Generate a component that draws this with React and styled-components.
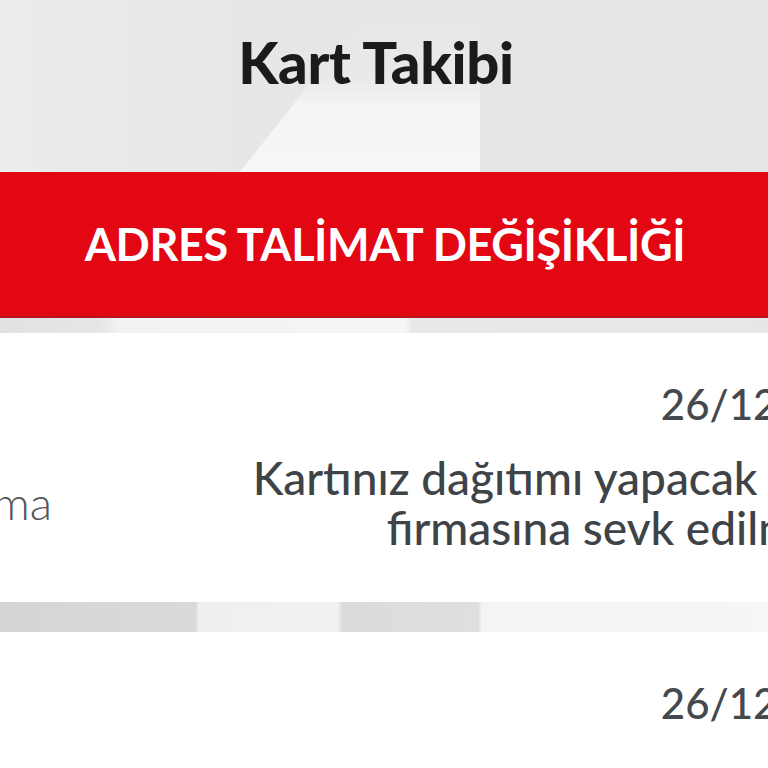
import React from "react";
import styled, { createGlobalStyle } from "styled-components";

const steps = [
  {
    label: "Kargolama",
    date: "26/12/2019",
    lines: ["Kartınız dağıtımı yapacak kargo", "firmasına sevk edilmiştir."],
  },
  {
    label: "Hazırlanma",
    date: "26/12/2019",
    lines: [],
  },
];

const App = () => {
  return (
    <>
      <GlobalStyle />
      <StPage>
        <StHeader>
          <StTitle>Kart Takibi</StTitle>
        </StHeader>
        <StBanner>
          <StBannerText>ADRES TALİMAT DEĞİŞİKLİĞİ</StBannerText>
        </StBanner>
        <StGap height="15px" variant="top" />
        {steps.map((step, i) => (
          <React.Fragment key={i}>
            <StCard>
              <StRow>
                <StLabel>
                  <span>{step.label}</span>
                </StLabel>
                <StDetail>
                  <StDate>{step.date}</StDate>
                  {step.lines.length > 0 && (
                    <StDescription>
                      {step.lines.map((line) => (
                        <span key={line}>{line}</span>
                      ))}
                    </StDescription>
                  )}
                </StDetail>
              </StRow>
            </StCard>
            {i === 0 && <StGap height="30px" variant="mid" />}
          </React.Fragment>
        ))}
      </StPage>
    </>
  );
};

export default App;

const GlobalStyle = createGlobalStyle`
  html, body {
    margin: 0;
    padding: 0;
    overflow: hidden;
    background: #fff;
  }
  body {
    font-family: "Lato", "Open Sans", sans-serif;
  }
`;

const StPage = styled.div`
  width: 768px;
  height: 768px;
  overflow: hidden;
  background: #fff;
`;

const StHeader = styled.header`
  position: relative;
  height: 172px;
  box-sizing: border-box;
  padding: 33px 16px 0 0;
  display: flex;
  justify-content: center;
  align-items: flex-start;
  background: linear-gradient(to right, #ebeced 0%, #e6e7e9 30%, #e4e5e7 100%);

  &::before {
    content: "";
    position: absolute;
    inset: 0;
    clip-path: polygon(376px 0, 480px 0, 480px 172px, 240px 172px);
    background: linear-gradient(
      to bottom,
      #e5e6e8 0%,
      #e8e9ea 45%,
      #f3f4f5 62%,
      #f6f7f8 100%
    );
  }
`;

const StTitle = styled.h1`
  position: relative;
  margin: 0;
  font-size: 58px;
  line-height: 58px;
  font-weight: 900;
  color: #1b1b1b;
  letter-spacing: -0.3px;
`;

const StBanner = styled.div`
  height: 146px;
  box-sizing: border-box;
  display: flex;
  align-items: center;
  justify-content: center;
  padding-left: 2px;
  background: #e30613;
  border-bottom: 2px solid #b8141c;
`;

const StBannerText = styled.h2`
  margin: 0;
  font-size: 45px;
  line-height: 47px;
  font-weight: 700;
  color: #fff;
  letter-spacing: -0.4px;
  white-space: nowrap;
`;

const StGap = styled.div`
  height: ${({ height }) => height};
  background: ${({ variant }) =>
    variant === "top"
      ? "linear-gradient(to right, #e1e2e3 0, #e5e6e7 100px, #f1f2f3 120px, #f4f5f5 405px, #e7e8e9 412px, #e6e7e8 768px)"
      : "linear-gradient(to right, #d4d5d7 0, #d9dadc 196px, #eeeff0 198px, #f0f1f2 338px, #dadbdd 342px, #dedfe1 478px, #f3f4f5 482px, #f5f6f7 768px)"};
`;

const StCard = styled.section`
  background: #fff;
  padding: 46px 0 49px;
`;

const StRow = styled.div`
  display: flex;
  align-items: flex-start;
  width: calc(100% + 114px);
`;

const StLabel = styled.div`
  flex: 0 0 52px;
  display: flex;
  justify-content: flex-end;
  overflow: hidden;
  padding-top: 99px;
  font-size: 46px;
  line-height: 50px;
  font-weight: 300;
  color: #555759;
  white-space: nowrap;
`;

const StDetail = styled.div`
  flex: 1;
  display: flex;
  flex-direction: column;
  align-items: flex-end;
  gap: 24px;
  text-align: right;
`;

const StDate = styled.div`
  font-size: 42px;
  line-height: 50px;
  font-weight: 500;
  color: #45494e;
  margin-right: -12px;
`;

const StDescription = styled.p`
  margin: 0;
  display: flex;
  flex-direction: column;
  align-items: flex-end;
  font-size: 46px;
  line-height: 50px;
  font-weight: 500;
  color: #3e4348;
  white-space: nowrap;
`;
